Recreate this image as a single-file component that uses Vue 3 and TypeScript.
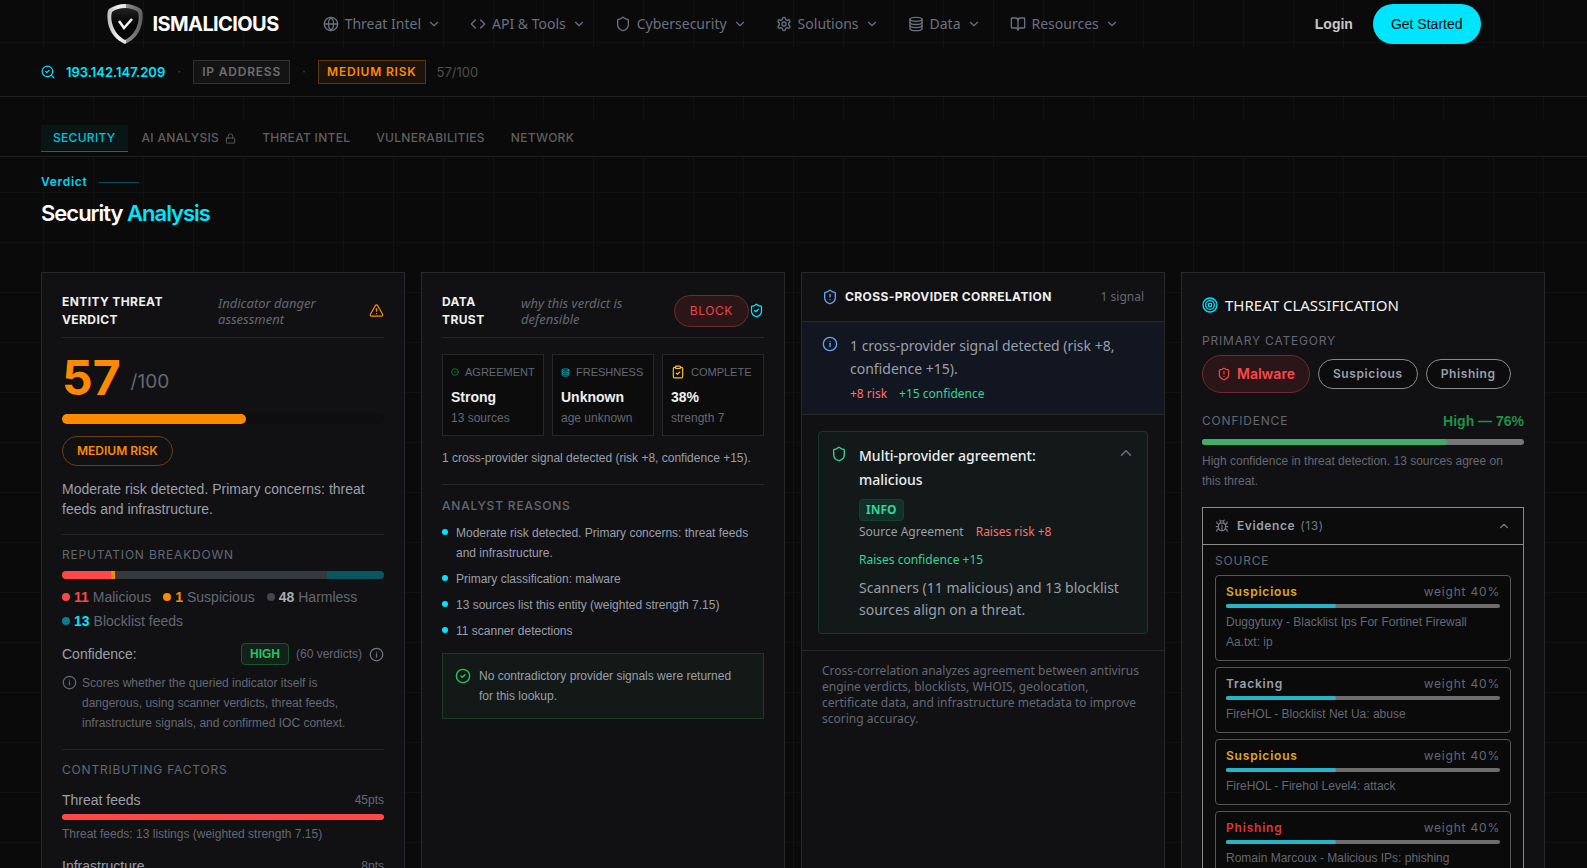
<script setup lang="ts">
import { h, ref } from 'vue'

const shapes: Record<string, string> = {
  globe: '<circle cx="12" cy="12" r="10"/><path d="M12 2a14.5 14.5 0 0 0 0 20 14.5 14.5 0 0 0 0-20"/><path d="M2 12h20"/>',
  code: '<path d="m16 18 6-6-6-6"/><path d="m8 6-6 6 6 6"/>',
  shield: '<path d="M20 13c0 5-3.5 7.5-7.66 8.95a1 1 0 0 1-.67-.01C7.5 20.5 4 18 4 13V6a1 1 0 0 1 1-1c2 0 4.5-1.2 6.24-2.72a1.17 1.17 0 0 1 1.52 0C14.51 3.81 17 5 19 5a1 1 0 0 1 1 1z"/>',
  gear: '<path d="M12.22 2h-.44a2 2 0 0 0-2 2v.18a2 2 0 0 1-1 1.73l-.43.25a2 2 0 0 1-2 0l-.15-.08a2 2 0 0 0-2.73.73l-.22.38a2 2 0 0 0 .73 2.73l.15.1a2 2 0 0 1 1 1.72v.51a2 2 0 0 1-1 1.74l-.15.09a2 2 0 0 0-.73 2.73l.22.38a2 2 0 0 0 2.73.73l.15-.08a2 2 0 0 1 2 0l.43.25a2 2 0 0 1 1 1.73V20a2 2 0 0 0 2 2h.44a2 2 0 0 0 2-2v-.18a2 2 0 0 1 1-1.73l.43-.25a2 2 0 0 1 2 0l.15.08a2 2 0 0 0 2.73-.73l.22-.39a2 2 0 0 0-.73-2.73l-.15-.08a2 2 0 0 1-1-1.74v-.5a2 2 0 0 1 1-1.74l.15-.09a2 2 0 0 0 .73-2.73l-.22-.38a2 2 0 0 0-2.73-.73l-.15.08a2 2 0 0 1-2 0l-.43-.25a2 2 0 0 1-1-1.73V4a2 2 0 0 0-2-2z"/><circle cx="12" cy="12" r="3"/>',
  layers: '<ellipse cx="12" cy="5" rx="9" ry="3"/><path d="M3 5v14a9 3 0 0 0 18 0V5"/><path d="M3 9.7a9 3 0 0 0 18 0"/><path d="M3 14.4a9 3 0 0 0 18 0"/>',
  book: '<path d="M12 6v15"/><path d="M3 18a1 1 0 0 1-1-1V4a1 1 0 0 1 1-1h5a4 4 0 0 1 4 4 4 4 0 0 1 4-4h5a1 1 0 0 1 1 1v13a1 1 0 0 1-1 1h-6a3 3 0 0 0-3 3 3 3 0 0 0-3-3z"/>',
  down: '<path d="m6 9 6 6 6-6"/>',
  up: '<path d="m18 15-6-6-6 6"/>',
  searchCheck: '<path d="m8 11 2 2 4-4"/><circle cx="11" cy="11" r="9"/><path d="m22 22-4.5-4.5"/>',
  lock: '<rect x="3" y="11" width="18" height="11" rx="1"/><path d="M7 11V7a5 5 0 0 1 10 0v4"/>',
  warning: '<path d="m21.73 18-8-14a2 2 0 0 0-3.48 0l-8 14A2 2 0 0 0 4 21h16a2 2 0 0 0 1.73-3"/><path d="M12 9v4"/><path d="M12 17h.01"/>',
  info: '<circle cx="12" cy="12" r="10"/><path d="M12 16v-5"/><path d="M12 8h.01"/>',
  shieldCheck: '<path d="M20 13c0 5-3.5 7.5-7.66 8.95a1 1 0 0 1-.67-.01C7.5 20.5 4 18 4 13V6a1 1 0 0 1 1-1c2 0 4.5-1.2 6.24-2.72a1.17 1.17 0 0 1 1.52 0C14.51 3.81 17 5 19 5a1 1 0 0 1 1 1z"/><path d="m9 12 2 2 4-4"/>',
  shieldAlert: '<path d="M20 13c0 5-3.5 7.5-7.66 8.95a1 1 0 0 1-.67-.01C7.5 20.5 4 18 4 13V6a1 1 0 0 1 1-1c2 0 4.5-1.2 6.24-2.72a1.17 1.17 0 0 1 1.52 0C14.51 3.81 17 5 19 5a1 1 0 0 1 1 1z"/><path d="M12 8v4"/><path d="M12 16h.01"/>',
  circleCheck: '<circle cx="12" cy="12" r="10"/><path d="m9 12 2 2 4-4"/>',
  clipboard: '<rect x="8" y="2" width="8" height="4" rx="1"/><path d="M16 4h2a2 2 0 0 1 2 2v14a2 2 0 0 1-2 2H6a2 2 0 0 1-2-2V6a2 2 0 0 1 2-2h2"/><path d="m9 14 2 2 4-4"/>',
  target: '<circle cx="12" cy="12" r="10.5"/><circle cx="12" cy="12" r="6.5"/><circle cx="12" cy="12" r="2.5"/>',
  bug: '<path d="M12 20v-9"/><path d="M14 7a4 4 0 0 1 4 4v3a6 6 0 0 1-12 0v-3a4 4 0 0 1 4-4z"/><path d="M14.1 3.9 16 2M8 2l1.9 1.9M9 7V6a3 3 0 1 1 6 0v1"/><path d="M21 21a4 4 0 0 0-3.8-4M3 21a4 4 0 0 1 3.8-4M22 13h-4M6 13H2M21 5a4 4 0 0 1-3.6 4M3 5a4 4 0 0 0 3.5 4"/>',
}

const Icon = (p: { name: string; size?: number }) =>
  h('svg', {
    viewBox: '0 0 24 24',
    width: p.size ?? 16,
    height: p.size ?? 16,
    fill: 'none',
    stroke: 'currentColor',
    'stroke-width': 2,
    'stroke-linecap': 'round',
    'stroke-linejoin': 'round',
    'aria-hidden': 'true',
    innerHTML: shapes[p.name],
  })
Icon.props = ['name', 'size']

const nav = [
  { label: 'Threat Intel', icon: 'globe' },
  { label: 'API & Tools', icon: 'code' },
  { label: 'Cybersecurity', icon: 'shield' },
  { label: 'Solutions', icon: 'gear' },
  { label: 'Data', icon: 'layers' },
  { label: 'Resources', icon: 'book' },
]

const tabs = ['Security', 'AI Analysis', 'Threat Intel', 'Vulnerabilities', 'Network']
const activeTab = ref('Security')

const breakdown = [
  { count: 11, label: 'Malicious', tone: 'red' },
  { count: 1, label: 'Suspicious', tone: 'orange' },
  { count: 48, label: 'Harmless', tone: 'gray' },
  { count: 13, label: 'Blocklist feeds', tone: 'teal' },
]

const factors = [
  { name: 'Threat feeds', pts: 45, width: 100, note: 'Threat feeds: 13 listings (weighted strength 7.15)' },
  { name: 'Infrastructure', pts: 8, width: 18, note: 'Infrastructure signals' },
]

const trust = [
  { icon: 'circleCheck', size: 8, tone: 'green', label: 'Agreement', value: 'Strong', sub: '13 sources' },
  { icon: 'layers', size: 9, tone: 'cyan', label: 'Freshness', value: 'Unknown', sub: 'age unknown' },
  { icon: 'clipboard', size: 14, tone: 'amber', label: 'Complete', value: '38%', sub: 'strength 7' },
]

const reasons = [
  'Moderate risk detected. Primary concerns: threat feeds and infrastructure.',
  'Primary classification: malware',
  '13 sources list this entity (weighted strength 7.15)',
  '11 scanner detections',
]

const signalOpen = ref(true)
const evidenceOpen = ref(true)
const evidence = [
  { kind: 'Suspicious', tone: 'amber', weight: 40, source: 'Duggytuxy - Blacklist Ips For Fortinet Firewall Aa.txt: ip' },
  { kind: 'Tracking', tone: 'plain', weight: 40, source: 'FireHOL - Blocklist Net Ua: abuse' },
  { kind: 'Suspicious', tone: 'amber', weight: 40, source: 'FireHOL - Firehol Level4: attack' },
  { kind: 'Phishing', tone: 'red', weight: 40, source: 'Romain Marcoux - Malicious IPs: phishing' },
]
</script>

<template>
  <div class="page">
    <header class="topbar">
      <a class="brand" href="#">
        <svg class="logo" viewBox="0 0 36 40" aria-hidden="true">
          <defs>
            <linearGradient id="rim" x1="0" y1="0" x2="1" y2="0">
              <stop offset="0" stop-color="#b8b8b8" />
              <stop offset="0.3" stop-color="#f4f4f4" />
              <stop offset="0.52" stop-color="#e0e0e0" />
              <stop offset="0.54" stop-color="#8c8c8c" />
              <stop offset="1" stop-color="#5e5e5e" />
            </linearGradient>
            <linearGradient id="core" x1="0" y1="0" x2="0" y2="1">
              <stop offset="0" stop-color="#222222" />
              <stop offset="0.5" stop-color="#030303" />
            </linearGradient>
          </defs>
          <path d="M18 0C24 0 30 2 34 5c2 2 2 8 1 14-2 10-8 17-17 21C9 36 3 29 1 19 0 13 0 7 2 5 6 2 12 0 18 0z" fill="url(#rim)" />
          <path d="M18 4c5 0 9 1 13 4 1 3 1 7 0 11-2 8-6 13-13 17C11 32 7 27 5 19 4 15 4 11 5 8c4-3 8-4 13-4z" fill="url(#core)" />
          <path d="m12 17 5 7 8-9" fill="none" stroke="#f2f2f2" stroke-width="2.6" />
        </svg>
        <span class="brand-name">ISMALICIOUS</span>
      </a>
      <nav class="nav" aria-label="Main">
        <button v-for="item in nav" :key="item.label" class="nav-item" type="button">
          <Icon :name="item.icon" :size="16" />
          <span>{{ item.label }}</span>
          <Icon name="down" :size="14" />
        </button>
      </nav>
      <div class="account">
        <a class="login" href="#">Login</a>
        <a class="cta" href="#">Get Started</a>
      </div>
    </header>

    <section class="subject" aria-label="Lookup subject">
      <div class="shell subject-row">
        <Icon name="searchCheck" :size="14" class="cyan" />
        <span class="ip">193.142.147.209</span>
        <span class="sep">·</span>
        <span class="tag">IP ADDRESS</span>
        <span class="sep">·</span>
        <span class="tag tag-risk">MEDIUM RISK</span>
        <span class="score-mini">57/100</span>
      </div>
    </section>

    <div class="tabbar">
      <div class="shell tabs" role="tablist">
        <button
          v-for="tab in tabs"
          :key="tab"
          type="button"
          role="tab"
          class="tab"
          :class="{ active: tab === activeTab }"
          :aria-selected="tab === activeTab"
          @click="activeTab = tab"
        >
          {{ tab }}
          <Icon v-if="tab === 'AI Analysis'" name="lock" :size="11" />
        </button>
      </div>
    </div>

    <main class="shell">
      <p class="eyebrow">Verdict</p>
      <h1 class="title">Security <span class="cyan">Analysis</span></h1>

      <div class="cards">
        <section class="card padded">
          <header class="card-head">
            <h2 class="card-title narrow-a">ENTITY THREAT VERDICT</h2>
            <p class="card-sub narrow-b">Indicator danger assessment</p>
            <Icon name="warning" :size="15" class="orange end" />
          </header>
          <div class="score"><strong>57</strong><span>/100</span></div>
          <div class="track"><div class="fill" :style="{ width: '57%' }"></div></div>
          <span class="pill">MEDIUM RISK</span>
          <p class="lead">Moderate risk detected. Primary concerns: threat feeds and infrastructure.</p>

          <hr />
          <h3 class="label">Reputation breakdown</h3>
          <div class="stack">
            <span
              v-for="b in breakdown"
              :key="b.label"
              :class="['seg', 'bg-' + b.tone]"
              :style="{ flexGrow: b.count }"
            ></span>
          </div>
          <ul class="legend">
            <li v-for="b in breakdown" :key="b.label">
              <i :class="['dot', 'dot-' + b.tone]"></i>
              <b :class="'num-' + b.tone">{{ b.count }}</b>
              <span>{{ b.label }}</span>
            </li>
          </ul>
          <div class="confidence">
            <span class="conf-label">Confidence:</span>
            <span class="high">HIGH</span>
            <span class="verdicts">(60 verdicts)</span>
            <Icon name="info" :size="15" class="muted" />
          </div>
          <div class="note">
            <Icon name="info" :size="15" />
            <p>Scores whether the queried indicator itself is dangerous, using scanner verdicts, threat feeds, infrastructure signals, and confirmed IOC context.</p>
          </div>

          <hr />
          <h3 class="label">Contributing factors</h3>
          <div v-for="f in factors" :key="f.name" class="factor">
            <div class="factor-head"><span>{{ f.name }}</span><small>{{ f.pts }}pts</small></div>
            <div class="factor-track"><div class="factor-fill" :style="{ width: f.width + '%' }"></div></div>
            <p class="small">{{ f.note }}</p>
          </div>
        </section>

        <section class="card padded">
          <header class="card-head">
            <h2 class="card-title narrow-c">DATA TRUST</h2>
            <p class="card-sub narrow-d">why this verdict is defensible</p>
            <span class="block-pill end">BLOCK</span>
            <Icon name="shieldCheck" :size="15" class="cyan" />
          </header>
          <div class="tiles">
            <div v-for="t in trust" :key="t.label" class="tile">
              <div class="tile-label"><Icon :name="t.icon" :size="t.size" :class="'ic-' + t.tone" />{{ t.label }}</div>
              <strong>{{ t.value }}</strong>
              <span class="tile-sub">{{ t.sub }}</span>
            </div>
          </div>
          <p class="summary">1 cross-provider signal detected (risk +8, confidence +15).</p>

          <hr />
          <h3 class="label strong">Analyst reasons</h3>
          <ul class="reasons">
            <li v-for="r in reasons" :key="r">{{ r }}</li>
          </ul>
          <div class="callout">
            <Icon name="circleCheck" :size="16" class="ic-bright" />
            <p>No contradictory provider signals were returned for this lookup.</p>
          </div>
        </section>

        <section class="card">
          <header class="corr-head">
            <Icon name="shieldAlert" :size="16" class="blue" />
            <h2 class="card-title">CROSS-PROVIDER CORRELATION</h2>
            <span class="count">1 signal</span>
          </header>
          <div class="corr-info">
            <Icon name="info" :size="16" class="blue" />
            <div>
              <p class="corr-text">1 cross-provider signal detected (risk +8, confidence +15).</p>
              <p class="effects"><span class="salmon">+8 risk</span><span class="mint">+15 confidence</span></p>
            </div>
          </div>
          <div class="corr-body">
            <article class="signal">
              <Icon name="shield" :size="16" class="mint signal-icon" />
              <div class="signal-main">
                <h3>Multi-provider agreement: malicious</h3>
                <span class="info-badge">INFO</span>
                <div class="effects signal-effects">
                  <span>Source Agreement</span>
                  <span class="salmon">Raises risk +8</span>
                  <span class="mint">Raises confidence +15</span>
                </div>
                <p v-if="signalOpen" class="signal-text">Scanners (11 malicious) and 13 blocklist sources align on a threat.</p>
              </div>
              <button class="toggle" type="button" aria-label="Toggle signal details" @click="signalOpen = !signalOpen">
                <Icon :name="signalOpen ? 'up' : 'down'" :size="18" />
              </button>
            </article>
          </div>
          <p class="corr-foot">Cross-correlation analyzes agreement between antivirus engine verdicts, blocklists, WHOIS, geolocation, certificate data, and infrastructure metadata to improve scoring accuracy.</p>
        </section>

        <section class="card padded">
          <h2 class="class-title"><Icon name="target" :size="16" class="cyan" />THREAT CLASSIFICATION</h2>
          <h3 class="label">Primary category</h3>
          <div class="categories">
            <span class="cat cat-main"><Icon name="shieldAlert" :size="14" />Malware</span>
            <span class="cat">Suspicious</span>
            <span class="cat">Phishing</span>
          </div>
          <div class="conf-row"><h3 class="label">Confidence</h3><strong>High — 76%</strong></div>
          <div class="conf-track"><div class="conf-fill" :style="{ width: '76%' }"></div></div>
          <p class="small">High confidence in threat detection. 13 sources agree on this threat.</p>

          <div class="evidence">
            <button class="evidence-head" type="button" :aria-expanded="evidenceOpen" @click="evidenceOpen = !evidenceOpen">
              <Icon name="bug" :size="14" />
              <b>Evidence</b><span>(13)</span>
              <Icon :name="evidenceOpen ? 'up' : 'down'" :size="14" class="end" />
            </button>
            <div v-if="evidenceOpen" class="evidence-body">
              <h3 class="label">Source</h3>
              <article v-for="(e, i) in evidence" :key="i" class="item">
                <div class="item-head"><b :class="'kind-' + e.tone">{{ e.kind }}</b><span>weight {{ e.weight }}%</span></div>
                <div class="item-track"><div class="item-fill" :style="{ width: e.weight + '%' }"></div></div>
                <p class="small">{{ e.source }}</p>
              </article>
            </div>
          </div>
        </section>
      </div>
    </main>
  </div>
</template>

<style>
html {
  scrollbar-width: none;
  background: #0a0a0a;
}
body {
  margin: 0;
}
</style>

<style scoped>
.page {
  --ui: Inter, 'Liberation Sans', sans-serif;
  --copy: 'Liberation Sans', Arial, sans-serif;
  --alt: 'Noto Sans', 'Open Sans', sans-serif;
  --dim: #636874;
  --soft: #9a9fab;
  --line: #26272a;
  min-height: 100vh;
  font-family: var(--ui);
  font-size: 12px;
  line-height: 20px;
  color: var(--soft);
  background-color: #0a0a0a;
  background-image:
    linear-gradient(to right, #101111 1px, transparent 1px),
    linear-gradient(to bottom, #101111 1px, transparent 1px);
  background-size: 50px 50px;
  background-position: 43px 42px;
}
.page *,
.page *::before {
  box-sizing: border-box;
}
h1, h2, h3, p, ul {
  margin: 0;
  padding: 0;
  font-weight: 400;
}
ul {
  list-style: none;
}
button {
  font: inherit;
  color: inherit;
  background: none;
  border: 0;
  padding: 0;
  cursor: pointer;
}
a {
  color: inherit;
  text-decoration: none;
}
svg {
  flex: none;
  display: block;
}
hr {
  border: 0;
  border-top: 1px solid var(--line);
  margin: 15px 0 10px;
}
.end { margin-left: auto; }
.cyan { color: #00e5ff; }
.orange { color: #ff8a00; }
.muted { color: #727783; }
.blue { color: #60a5fa; }
.salmon { color: #f87171; }
.mint { color: #34d399; }
.shell {
  margin: 0 42px 0 41px;
}

.topbar {
  display: flex;
  align-items: center;
  height: 48px;
  max-width: 1374px;
  margin: 0 auto;
}
.brand {
  display: flex;
  align-items: center;
  gap: 10px;
}
.logo {
  width: 36px;
  height: 40px;
}
.brand-name {
  font-size: 20px;
  font-weight: 700;
  letter-spacing: -0.6px;
  color: #fff;
}
.nav {
  display: flex;
  gap: 29px;
  margin-left: 44px;
  font-family: var(--alt);
  font-size: 14px;
  color: #6b7080;
}
.nav-item {
  display: flex;
  align-items: center;
  gap: 6px;
  white-space: nowrap;
}
.account {
  display: flex;
  align-items: center;
  gap: 20px;
  margin-left: auto;
  font-size: 14px;
}
.login {
  font-family: var(--copy);
  font-weight: 700;
  color: #c9c9c9;
}
.cta {
  padding: 10px 18px;
  border-radius: 20px;
  background: #00e5ff;
  color: #0a0a0a;
  font-family: var(--copy);
}

.subject {
  background: #0a0a0a;
  border-bottom: 1px solid #1f1f1f;
}
.subject-row {
  display: flex;
  align-items: center;
  gap: 11px;
  padding: 12px 0;
}
.ip {
  font-size: 13px;
  font-weight: 600;
  color: #00e5ff;
}
.sep {
  width: 6px;
  text-align: center;
  color: #4a4a4a;
}
.tag {
  height: 24px;
  padding: 0 8px;
  border: 1px solid #303030;
  background: #141414;
  line-height: 22px;
  font-weight: 600;
  letter-spacing: 0.8px;
  color: #6e6e6e;
}
.tag-risk {
  border-color: #5e3706;
  background: #1c130a;
  color: #ff8a00;
}
.score-mini {
  font-size: 13px;
  color: #4f4f4f;
}

.tabbar {
  margin-top: 23px;
  padding: 5px 0 4px;
  background: #0a0a0a;
  border-bottom: 1px solid #1f1f1f;
}
.tabs {
  display: flex;
  gap: 2px;
}
.tab {
  display: flex;
  align-items: center;
  gap: 6px;
  height: 27px;
  padding: 0 12px;
  border-bottom: 1px solid transparent;
  font-weight: 500;
  letter-spacing: 0.3px;
  text-transform: uppercase;
  color: #5f5f5f;
}
.tab.active {
  background: #081616;
  border-color: #0a6f7b;
  color: #00c3d9;
}

.eyebrow {
  display: flex;
  align-items: center;
  gap: 12px;
  padding-top: 15px;
  font-weight: 600;
  letter-spacing: 0.7px;
  color: #00d5ee;
}
.eyebrow::after {
  content: '';
  width: 40px;
  height: 1px;
  background: #075058;
}
.title {
  margin: 5px 0 43px;
  font-size: 22px;
  line-height: 32px;
  font-weight: 600;
  letter-spacing: -1px;
  color: #fff;
}

.cards {
  display: grid;
  grid-template-columns: repeat(4, minmax(0, 1fr));
  gap: 16px;
}
.card {
  border: 1px solid var(--line);
  background: #111113;
}
.padded {
  padding: 20px;
}
.card-head {
  display: flex;
  align-items: center;
  height: 45px;
  padding-bottom: 9px;
  margin-bottom: 16px;
  border-bottom: 1px solid var(--line);
}
.card-title {
  font-size: 12px;
  line-height: 18px;
  font-weight: 700;
  letter-spacing: 0.4px;
  color: #f0f0f0;
}
.card-sub {
  font-family: var(--alt);
  font-size: 13px;
  line-height: 16px;
  font-style: italic;
  color: var(--dim);
}
.narrow-a { flex: 0 0 156px; padding-right: 40px; }
.narrow-b { flex: 0 1 110px; }
.narrow-c { flex: 0 0 79px; padding-right: 30px; }
.narrow-d { flex: 0 1 120px; }
.block-pill {
  height: 32px;
  padding: 0 15px;
  border: 1px solid #702a2d;
  border-radius: 16px;
  background: #2a1618;
  line-height: 30px;
  letter-spacing: 0.6px;
  color: #f04444;
}

.score {
  display: flex;
  align-items: center;
  gap: 10px;
  height: 48px;
}
.score strong {
  font-size: 48px;
  line-height: 48px;
  font-weight: 700;
  color: #ff8a00;
}
.score span {
  padding-top: 8px;
  font-size: 19px;
  color: var(--dim);
}
.track {
  height: 10px;
  margin: 12px 0;
  border-radius: 5px;
  background: #0e0e0f;
}
.fill {
  height: 100%;
  border-radius: 5px;
  background: #ff8a00;
}
.pill {
  display: inline-block;
  height: 30px;
  padding: 0 14px;
  border: 1px solid #6a3f0c;
  border-radius: 15px;
  line-height: 28px;
  font-weight: 600;
  color: #ff8a00;
}
.lead {
  margin-top: 13px;
  font-family: var(--copy);
  font-size: 14px;
}
.label {
  font-size: 12px;
  line-height: 20px;
  letter-spacing: 0.8px;
  text-transform: uppercase;
  color: var(--dim);
}
.strong { font-weight: 500; }
.stack {
  display: flex;
  height: 8px;
  margin: 6px 0 8px;
  overflow: hidden;
  border-radius: 4px;
}
.seg { flex-basis: 0; }
.bg-red { background: #ff4747; }
.bg-orange { background: #ff8a00; }
.bg-gray { background: #35383d; }
.bg-teal { background: #08565f; }
.legend {
  display: flex;
  flex-wrap: wrap;
  gap: 4px 12px;
  font-family: var(--copy);
  font-size: 14px;
}
.legend li {
  display: flex;
  align-items: center;
  gap: 4px;
  color: var(--dim);
}
.dot {
  width: 8px;
  height: 8px;
  border-radius: 50%;
}
.dot-red { background: #ff4747; }
.dot-orange { background: #ff8a00; }
.dot-gray { background: #43454d; }
.dot-teal { background: #087f8c; }
.num-red { color: #ff4747; }
.num-orange { color: #ff8a00; }
.num-gray { color: #a8acb6; }
.num-teal { color: #00e5ff; }
.confidence {
  display: flex;
  align-items: center;
  gap: 7px;
  height: 22px;
  margin-top: 12px;
  font-family: var(--copy);
}
.conf-label {
  margin-right: auto;
  font-size: 14px;
}
.high {
  height: 22px;
  padding: 0 8px;
  border: 1px solid #1a5530;
  border-radius: 4px;
  background: #12211a;
  line-height: 20px;
  font-weight: 700;
  color: #22c55e;
}
.verdicts { color: var(--dim); }
.note {
  display: flex;
  gap: 5px;
  margin: 8px 0 16px;
  padding-right: 20px;
  font-family: var(--copy);
  color: var(--dim);
}
.note svg { margin-top: 2px; }
.factor { margin: 10px 0 12px; }
.factor-head {
  display: flex;
  justify-content: space-between;
  font-family: var(--copy);
  font-size: 14px;
}
.factor-head small {
  font-size: 12px;
  color: var(--dim);
}
.factor-track {
  height: 6px;
  margin: 4px 0;
  border-radius: 3px;
  background: #0e0e0f;
}
.factor-fill {
  height: 100%;
  border-radius: 3px;
  background: #ff4747;
}
.small {
  font-family: var(--copy);
  font-size: 12px;
  color: var(--dim);
}

.tiles {
  display: grid;
  grid-template-columns: repeat(3, minmax(0, 1fr));
  gap: 8px;
}
.tile {
  height: 82px;
  padding: 7px 8px;
  border: 1px solid var(--line);
  background: #0c0c0d;
  font-family: var(--copy);
}
.tile-label {
  display: flex;
  align-items: center;
  gap: 6px;
  font-size: 11px;
  text-transform: uppercase;
  white-space: nowrap;
  color: var(--dim);
}
.tile strong {
  display: block;
  margin-top: 4px;
  line-height: 22px;
  font-size: 14px;
  font-weight: 700;
  color: #f0f0f0;
}
.tile-sub { color: var(--dim); }
.ic-green { color: #1f9d4d; }
.ic-cyan { color: #00bcd1; }
.ic-amber { color: #fbbf24; }
.ic-bright { color: #22c55e; }
.summary {
  margin-top: 12px;
  padding-bottom: 1px;
  font-family: var(--copy);
}
.strong { padding-top: 1px; }
.reasons {
  display: flex;
  flex-direction: column;
  gap: 6px;
  margin-top: 7px;
  font-family: var(--copy);
}
.reasons li {
  display: flex;
  gap: 8px;
}
.reasons li::before {
  content: '';
  flex: none;
  width: 6px;
  height: 6px;
  margin-top: 6px;
  border-radius: 50%;
  background: #00e5ff;
}
.callout {
  display: flex;
  gap: 8px;
  margin-top: 12px;
  padding: 12px 22px 12px 12px;
  border: 1px solid #173b25;
  background: #121917;
  font-family: var(--copy);
}
.callout svg { margin-top: 2px; }

.corr-head {
  display: flex;
  align-items: center;
  gap: 7px;
  height: 49px;
  padding: 0 20px;
  border-bottom: 1px solid var(--line);
}
.count {
  margin-left: auto;
  font-family: var(--alt);
  color: var(--dim);
}
.corr-info {
  display: flex;
  gap: 12px;
  padding: 12px 20px 10px;
  border-bottom: 1px solid var(--line);
  background: #121620;
  font-family: var(--alt);
}
.corr-info svg { margin-top: 2px; }
.corr-text {
  font-size: 14px;
  line-height: 23px;
}
.effects {
  display: flex;
  flex-wrap: wrap;
  gap: 0 12px;
  margin-top: 4px;
  font-size: 12px;
}
.corr-body {
  padding: 16px;
  border-bottom: 1px solid var(--line);
}
.signal {
  display: flex;
  gap: 12px;
  padding: 12px;
  border: 1px solid #123a30;
  border-radius: 4px;
  background: #121918;
  font-family: var(--alt);
}
.signal-icon { margin-top: 2px; }
.signal-main { flex: 1; }
.signal-main h3 {
  padding-right: 60px;
  font-size: 14px;
  line-height: 24px;
  font-weight: 500;
  color: #eceef2;
}
.info-badge {
  display: inline-block;
  height: 22px;
  margin-top: 7px;
  padding: 0 6px;
  border: 1px solid #12402f;
  border-radius: 4px;
  background: #11302a;
  line-height: 20px;
  font-weight: 700;
  color: #34d399;
}
.signal-effects {
  gap: 8px 12px;
  margin-top: 1px;
}
.signal-text {
  margin-top: 7px;
  font-size: 14px;
  line-height: 22px;
}
.toggle {
  align-self: flex-start;
  margin-left: -42px;
  color: #6b7080;
}
.corr-foot {
  padding: 12px 20px;
  font-family: var(--alt);
  line-height: 16px;
  color: var(--dim);
}

.class-title {
  display: flex;
  align-items: center;
  gap: 7px;
  margin-bottom: 14px;
  font-family: var(--alt);
  font-size: 15px;
  line-height: 24px;
  color: #f0f0f0;
}
.categories {
  display: flex;
  align-items: center;
  gap: 8px;
  margin: 4px 0 18px;
}
.cat {
  height: 30px;
  padding: 0 14px;
  border: 1px solid #8a8a8a;
  border-radius: 19px;
  background: #0c0c0d;
  line-height: 28px;
  font-weight: 600;
  letter-spacing: 0.6px;
}
.cat-main {
  display: flex;
  align-items: center;
  gap: 6px;
  height: 38px;
  border-color: #702a2d;
  background: #2a1618;
  font-size: 14px;
  letter-spacing: 0;
  color: #ff4747;
}
.conf-row {
  display: flex;
  justify-content: space-between;
}
.conf-row strong {
  font-family: var(--copy);
  font-size: 14px;
  font-weight: 700;
  color: #1e9246;
}
.conf-track {
  height: 6px;
  margin: 8px 0 6px;
  border-radius: 3px;
  background: #777;
}
.conf-fill {
  height: 100%;
  border-radius: 3px;
  background: #3fae68;
}
.evidence {
  margin-top: 16px;
  border: 1px solid #8a8a8a;
  background: #0c0c0d;
}
.evidence-head {
  display: flex;
  align-items: center;
  gap: 5px;
  width: 100%;
  height: 36px;
  padding: 0 12px;
  color: #727783;
  letter-spacing: 0.6px;
}
.evidence-head b {
  margin-left: 3px;
  font-weight: 600;
  color: var(--soft);
}
.evidence-body {
  padding: 6px 12px 12px;
  border-top: 1px solid #8a8a8a;
}
.item {
  margin: 4px 0 6px;
  padding: 8px 10px;
  border: 1px solid #56575a;
  border-radius: 4px;
  background: #0a0a0a;
}
.item + .item { margin-top: 0; }
.item-head {
  display: flex;
  justify-content: space-between;
  line-height: 16px;
  letter-spacing: 0.8px;
  color: var(--dim);
}
.item-head b { font-weight: 600; }
.kind-amber { color: #e0a820; }
.kind-plain { color: var(--soft); }
.kind-red { color: #dc3838; }
.item-track {
  height: 4px;
  margin: 4px 0;
  border-radius: 2px;
  background: #6e6e6e;
}
.item-fill {
  height: 100%;
  border-radius: 2px;
  background: #26b5c6;
}
</style>
